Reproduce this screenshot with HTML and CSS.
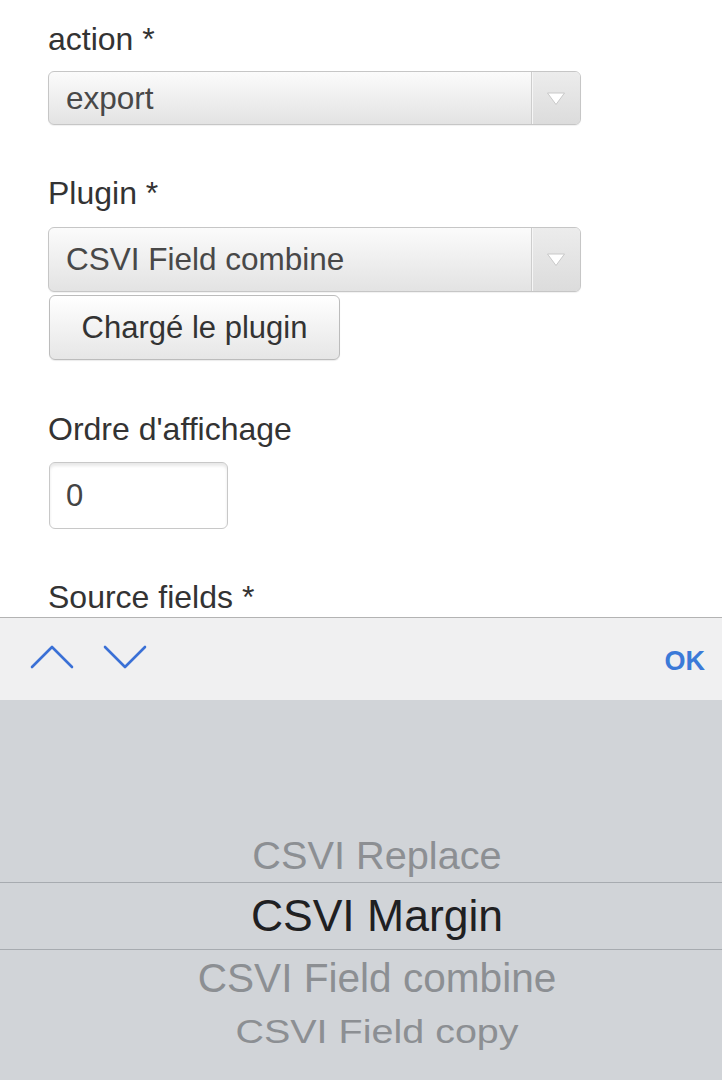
FILE: index.html
```html
<!DOCTYPE html>
<html lang="fr">
<head>
<meta charset="utf-8">
<title>Plugin form</title>
<link rel="stylesheet" href="styles.css">
</head>
<body>
<div class="screen">
  <form class="form">
    <label class="label label-first">action *</label>
    <div class="select select-sm">
      <span class="select-value">export</span>
      <span class="select-arrow"><svg width="20" height="15" viewBox="0 0 20 15"><path d="M1.5 2 H18.5 L10 13.5 Z" fill="#fff" stroke="#c4c4c4" stroke-width="0.9" stroke-linejoin="round"/></svg></span>
    </div>

    <label class="label">Plugin *</label>
    <div class="select select-lg">
      <span class="select-value">CSVI Field combine</span>
      <span class="select-arrow"><svg width="20" height="15" viewBox="0 0 20 15"><path d="M1.5 2 H18.5 L10 13.5 Z" fill="#fff" stroke="#c4c4c4" stroke-width="0.9" stroke-linejoin="round"/></svg></span>
    </div>
    <div class="btn">Chargé le plugin</div>

    <label class="label label-order">Ordre d'affichage</label>
    <div class="input">0</div>

    <label class="label">Source fields *</label>
  </form>

  <div class="toolbar">
    <div class="nav">
      <svg class="chev" width="44" height="26" viewBox="0 0 44 26"><path d="M2 23 L22 3 L42 23" fill="none" stroke="#3a70d6" stroke-width="2.6" stroke-linecap="round" stroke-linejoin="round"/></svg>
      <svg class="chev" width="44" height="26" viewBox="0 0 44 26"><path d="M2 3 L22 23 L42 3" fill="none" stroke="#3a70d6" stroke-width="2.6" stroke-linecap="round" stroke-linejoin="round"/></svg>
    </div>
    <span class="ok">OK</span>
  </div>

  <div class="picker">
    <div class="pick-row row-replace">CSVI Replace</div>
    <div class="pick-row row-selected">CSVI Margin</div>
    <div class="pick-row row-combine">CSVI Field combine</div>
    <div class="pick-row row-copy"><span class="squash">CSVI Field copy</span></div>
  </div>
</div>
</body>
</html>
```

FILE: styles.css
```css
* { box-sizing: border-box; }
html, body { margin: 0; padding: 0; background: #fff; }
body { font-family: "Liberation Sans", Arial, sans-serif; }

.screen {
  width: 722px;
  height: 1080px;
  overflow: hidden;
  display: flex;
  flex-direction: column;
}

.form {
  height: 617px;
  padding: 21px 0 0 48px;
  display: flex;
  flex-direction: column;
  align-items: flex-start;
  overflow: hidden;
}

.label {
  font-size: 32px;
  line-height: 36px;
  color: #333;
  margin-top: 50px;
}
.label-first { margin-top: 0; }
.label-order { margin-top: 51px; }

.select {
  width: 533px;
  border: 1px solid #c6c6c6;
  border-radius: 6px;
  background: linear-gradient(#fbfbfb, #e3e3e3);
  display: flex;
  align-items: stretch;
  box-shadow: 0 1px 1px rgba(0,0,0,0.06);
}
.select-sm { height: 54px; margin-top: 14px; }
.select-lg { height: 65px; margin-top: 16px; }

.select-value {
  flex: 1;
  display: flex;
  align-items: center;
  padding-left: 17px;
  font-size: 31.5px;
  color: #484848;
}
.select-arrow {
  width: 49px;
  display: flex;
  align-items: center;
  justify-content: center;
  border-left: 1px solid #cdcdcd;
  box-shadow: inset 1px 0 0 #f6f6f6;
  background: linear-gradient(#ececec, #dcdcdc);
  border-radius: 0 5px 5px 0;
}

.btn {
  margin-top: 3px;
  width: 291px;
  height: 65px;
  margin-left: 1px;
  border: 1px solid #bcbcbc;
  border-radius: 6px;
  background: linear-gradient(#ffffff, #e6e6e6);
  box-shadow: 0 1px 1px rgba(0,0,0,0.08);
  display: flex;
  align-items: center;
  justify-content: center;
  font-size: 31px;
  color: #333;
}

.input {
  margin-top: 15px;
  margin-left: 1px;
  width: 179px;
  height: 67px;
  border: 1px solid #c8c8c8;
  border-radius: 6px;
  background: #fff;
  box-shadow: inset 0 3px 3px rgba(0,0,0,0.09);
  display: flex;
  align-items: center;
  padding-left: 16px;
  font-size: 31px;
  color: #444;
}

.toolbar {
  height: 83px;
  border-top: 1px solid #b3b3b3;
  background: #f0f0f1;
  display: flex;
  align-items: center;
  justify-content: space-between;
  padding: 0 17px 0 30px;
}
.nav {
  display: flex;
  gap: 29px;
  align-items: center;
  margin-top: -4px;
}
.chev { display: block; }
.ok {
  font-size: 27px;
  font-weight: bold;
  color: #3b7ad8;
  margin-top: 4px;
}

.picker {
  flex: 1;
  background: #d1d4d8;
  padding-top: 128px;
  display: flex;
  flex-direction: column;
  font-family: "Liberation Sans", Arial, sans-serif;
}
.pick-row {
  display: flex;
  align-items: center;
  justify-content: center;
  padding-left: 32px;
  color: #8c8f93;
  white-space: nowrap;
}
.row-replace { height: 54px; font-size: 39.7px; }
.row-selected {
  height: 68px;
  font-size: 44.5px;
  color: #1f2022;
  border-top: 1px solid #a7abb0;
  border-bottom: 1px solid #a7abb0;
}
.row-combine { height: 56px; font-size: 40.6px; }
.row-copy { height: 50px; font-size: 39.5px; }
.squash { display: inline-block; transform: scaleY(0.82); }
```
